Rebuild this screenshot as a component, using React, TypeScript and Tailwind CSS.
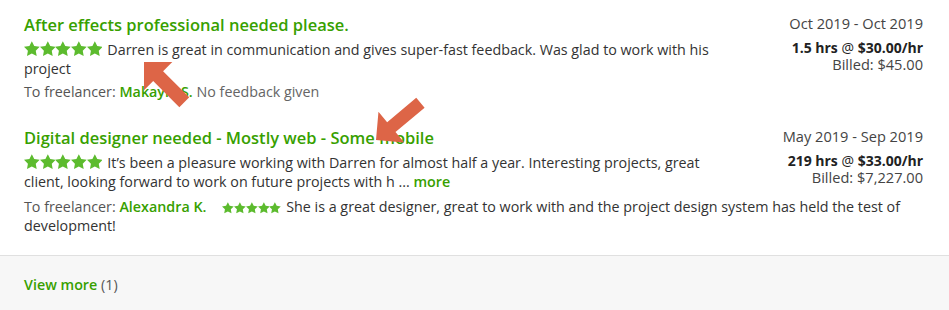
import React from "react";

const STAR =
  "M12 2l3.09 6.26L22 9.27l-5 4.87 1.18 6.88L12 17.77l-6.18 3.25L7 14.14 2 9.27l6.91-1.01L12 2z";

function Stars({ size = 16 }: { size?: number }) {
  return (
    <span className="inline-flex align-[-2px] mr-[5px]">
      {[0, 1, 2, 3, 4].map((i) => (
        <svg key={i} width={size * 0.98} height={size} viewBox="2 2 20 20">
          <path d={STAR} fill="#5cbb2e" />
        </svg>
      ))}
    </span>
  );
}

type Job = {
  title: string;
  dates: string;
  hours: string;
  rate: string;
  billed: string;
  review: React.ReactNode;
  freelancer: string;
  feedback: React.ReactNode;
  gapTop: string;
};

const jobs: Job[] = [
  {
    title: "After effects professional needed please.",
    dates: "Oct 2019 - Oct 2019",
    hours: "1.5 hrs",
    rate: "$30.00/hr",
    billed: "Billed: $45.00",
    review:
      "Darren is great in communication and gives super-fast feedback. Was glad to work with his project",
    freelancer: "Makayla S.",
    feedback: <span className="text-[#656565]"> No feedback given</span>,
    gapTop: "mt-[4px]",
  },
  {
    title: "Digital designer needed - Mostly web - Some mobile",
    dates: "May 2019 - Sep 2019",
    hours: "219 hrs",
    rate: "$33.00/hr",
    billed: "Billed: $7,227.00",
    review: (
      <>
        It’s been a pleasure working with Darren for almost half a year. Interesting projects, great
        client, looking forward to work on future projects with h ...{" "}
        <a className="font-semibold text-[#37a000]">more</a>
      </>
    ),
    freelancer: "Alexandra K.",
    feedback: (
      <>
        <span className="inline-block w-[16px]" />
        <Stars size={12} />
        <span className="text-[#333]">
          She is a great designer, great to work with and the project design system has held the
          test of development!
        </span>
      </>
    ),
    gapTop: "mt-[6px]",
  },
];

function JobRow({ job, first }: { job: Job; first: boolean }) {
  return (
    <div className={first ? "" : "mt-[26px]"}>
      <div className="flex justify-between">
        <div className="w-[710px]">
          <h4 className="text-[16.5px] leading-[22px] font-semibold text-[#37a000]">{job.title}</h4>
          <p className="mt-[4px] text-[14.3px] leading-[19px] text-[#333]">
            <Stars />
            {job.review}
          </p>
        </div>
        <div className="text-right text-[14.6px] text-[#444]">
          <div className="leading-[18px]">{job.dates}</div>
          <div className="mt-[7px] leading-[17px] text-[14px] text-[#222]">
            <b className="font-bold">{job.hours}</b> @ <b className="font-bold">{job.rate}</b>
          </div>
          <div className="leading-[17px]">{job.billed}</div>
        </div>
      </div>
      <p className={`${job.gapTop} text-[14.3px] leading-[19px]`}>
        <span className="text-[#555]">To freelancer: </span>
        <a className="font-semibold text-[#37a000]">{job.freelancer}</a>
        {job.feedback}
      </p>
    </div>
  );
}

export default function App() {
  return (
    <div
      className="relative w-[949px] h-[310px] overflow-hidden bg-white"
      style={{ fontFamily: "'Open Sans', sans-serif" }}
    >
      <div className="pl-6 pr-[26px] pt-[14px] pb-[20px]">
        {jobs.map((job, i) => (
          <JobRow key={job.title} job={job} first={i === 0} />
        ))}
      </div>
      <div className="h-[80px] border-t border-[#e0e0e0] bg-[#f7f7f7] px-6 pt-[19px]">
        <p className="text-[14.3px] leading-[20px]">
          <a className="font-semibold text-[#37a000]">View more</a>{" "}
          <span className="text-[#555]">(1)</span>
        </p>
      </div>

      {/* annotation arrows laid over the screenshot */}
      <svg className="pointer-events-none absolute inset-0" width="949" height="310">
        <polygon
          transform="translate(144 62) rotate(45)"
          points="0,0 20,-20 20,-7 57,-7 57,7 20,7 20,20"
          fill="#dd6547"
        />
        <polygon
          transform="translate(376 140) rotate(-40)"
          points="0,0 20,-20 20,-6.5 58,-6.5 58,6.5 20,6.5 20,20"
          fill="#dd6547"
        />
      </svg>
    </div>
  );
}
